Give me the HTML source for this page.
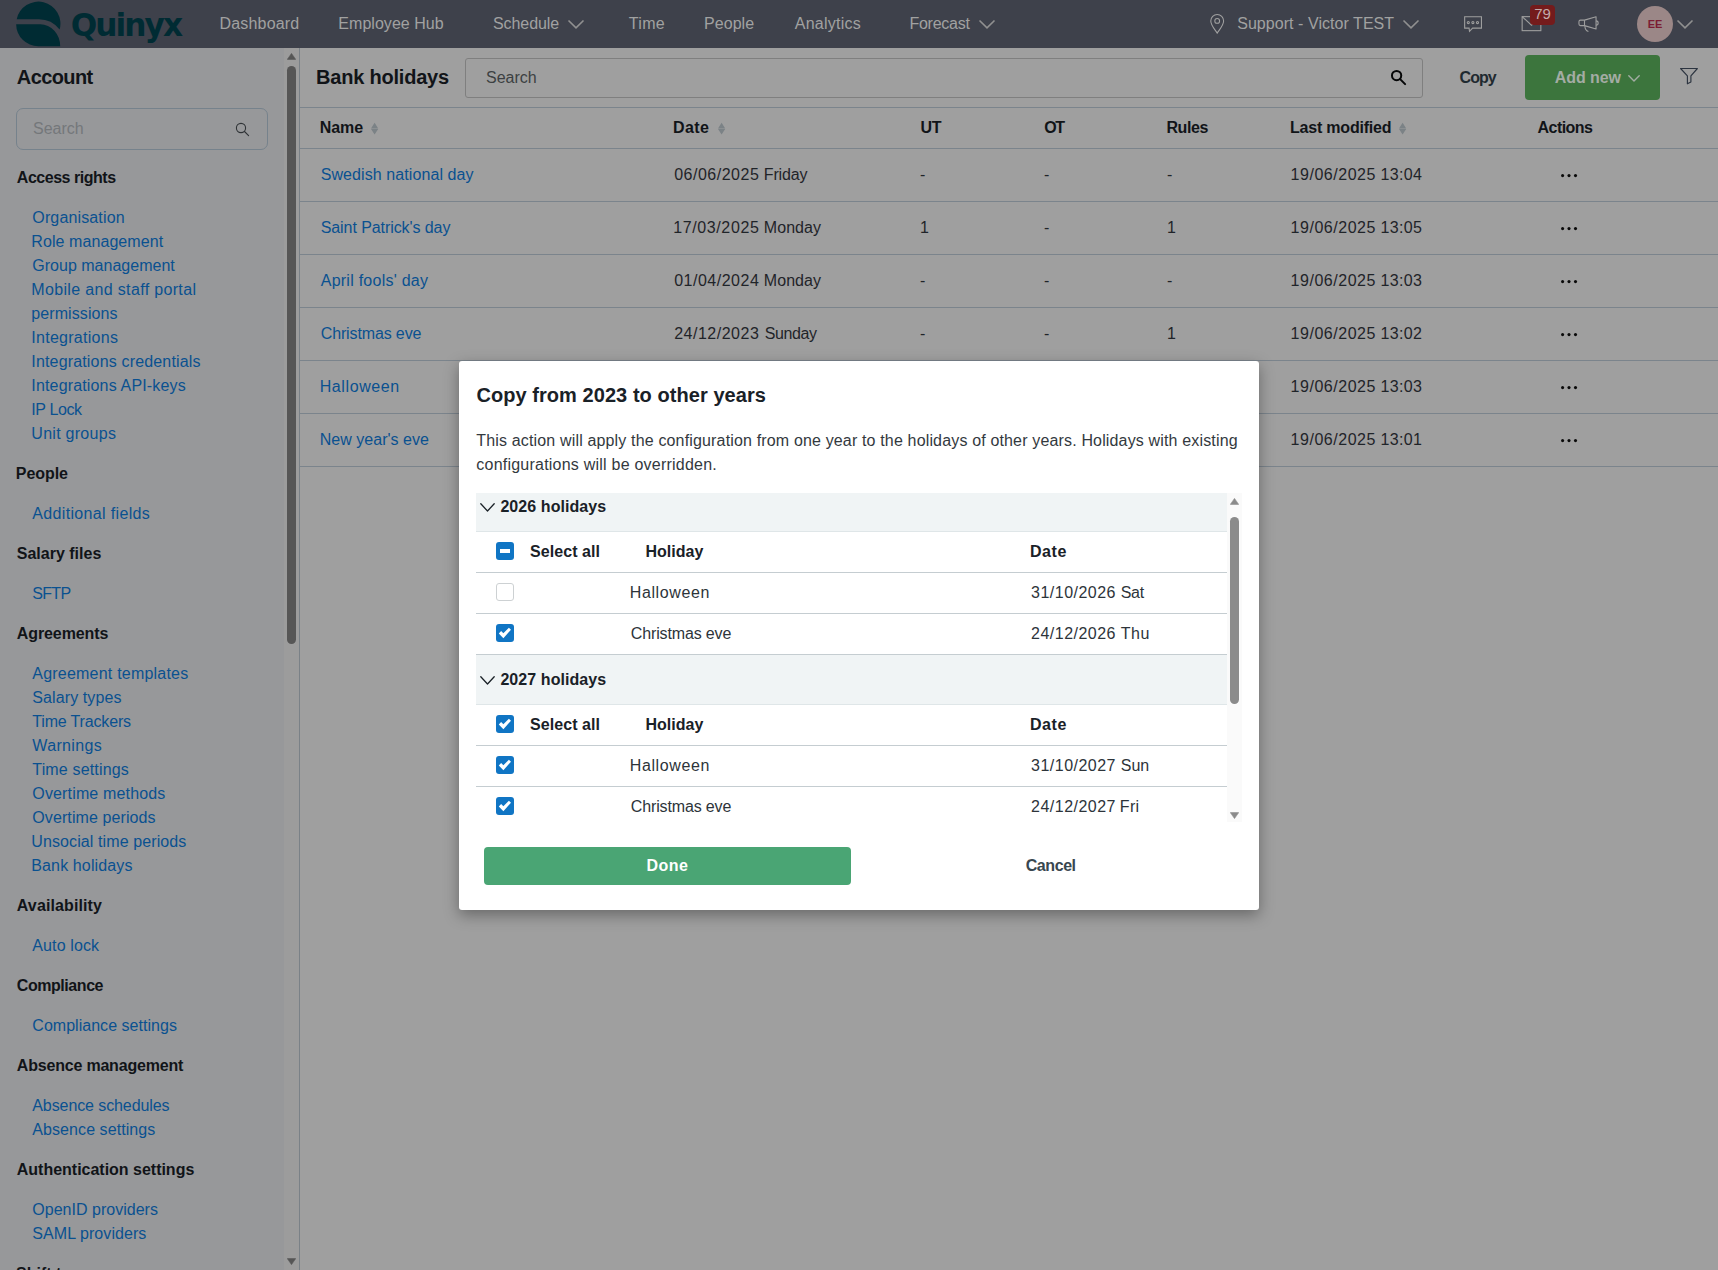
<!DOCTYPE html>
<html lang="en">
<head>
<meta charset="utf-8">
<title>Bank holidays - Quinyx</title>
<style>
*{box-sizing:border-box;margin:0;padding:0}
html,body{width:1718px;height:1270px;overflow:hidden;background:#9f9f9f}
body{font-family:"Liberation Sans",Arial,sans-serif;font-size:16px;color:#1f2429;position:relative}
a{text-decoration:none;color:inherit}
ul{list-style:none}
.abs{position:absolute;white-space:nowrap}
.fit{display:inline-block;white-space:nowrap}

/* ---------- top bar ---------- */
#topbar{position:absolute;left:0;top:0;width:1718px;height:48px;background:#3e414b;color:#a1a1a1}
#topbar .nav{position:absolute;top:0;height:48px;line-height:48px;font-size:16px;white-space:nowrap}
#topbar svg{position:absolute;overflow:visible}
#brand{position:absolute;left:71px;top:1px;height:48px;line-height:48px;font-family:"DejaVu Sans","Liberation Sans",sans-serif;font-size:31.2px;font-weight:700;color:#002b33;white-space:nowrap}
#badge{position:absolute;left:1530px;top:5px;width:25px;height:20px;border-radius:4px;background:#741b1c;color:#c3abab;font-size:15px;line-height:18px;text-align:center}
#avatar{position:absolute;left:1637px;top:6px;width:36px;height:36px;border-radius:50%;background:#9b8787;color:#7b1d33;font-size:11px;font-weight:700;line-height:36px;text-align:center}

/* ---------- sidebar ---------- */
#side{position:absolute;left:0;top:48px;width:300px;height:1222px;background:#97989a;border-right:1px solid #7a8187;overflow:hidden}
#side .track{position:absolute;left:284px;top:0;width:15px;height:1222px;background:#9c9c9c}
#side .thumb{position:absolute;left:287px;top:18px;width:9px;height:578px;border-radius:5px;background:#565656}
#side h2{position:absolute;left:16px;top:15px;font-size:20px;line-height:28px;font-weight:700;color:#111418;white-space:nowrap}
#sidesearch{position:absolute;left:16px;top:60px;width:252px;height:42px;border:1px solid #76828c;border-radius:7px;color:#74777a;line-height:40px;padding-left:16px}
#sidenav{position:absolute;left:16px;top:117.5px;width:260px}
#sidenav h3{font-size:16px;line-height:24px;font-weight:700;color:#111418;white-space:nowrap}
#sidenav ul{margin:16px 0 16px 16px}
#sidenav li{line-height:24px;color:#0a5190;white-space:nowrap}

/* ---------- main ---------- */
#main{position:absolute;left:300px;top:48px;width:1418px;height:1222px;background:#9f9f9f}
#main h1{position:absolute;left:16px;top:15px;font-size:20px;line-height:28px;font-weight:700;color:#111418;white-space:nowrap}
#search{position:absolute;left:165px;top:10px;width:958px;height:40px;border:1px solid #7f7f7f;border-radius:3px;line-height:38px;padding-left:20px;color:#3c3f42}
#copybtn{position:absolute;left:1159px;top:8px;height:45px;line-height:44px;font-weight:700;color:#1f2a30}
#addnew{position:absolute;left:1225px;top:7px;width:135px;height:45px;border-radius:4px;background:#3c753d;color:#a4aca4;font-weight:700;line-height:46px;padding-left:29px}
#tbl{position:absolute;left:0;top:59px;width:1418px;border-top:1px solid #7b848c}
#tbl .row{position:relative;height:53px;border-bottom:1px solid #7b848c;line-height:52px;white-space:nowrap}
#tbl .hd{height:41px;line-height:39px;font-weight:700;color:#111418}
#tbl .row span{position:absolute;top:0}
#tbl .c1{left:20px}#tbl .c2{left:374px}#tbl .c3{left:620px}#tbl .c4{left:744px}#tbl .c5{left:867px}#tbl .c6{left:990px}#tbl .c7{left:1237px}
#tbl .row .c1{color:#0a5190}
#tbl .hd .c1{color:#111418}
#tbl .dots{left:1260px;font-weight:700;letter-spacing:1px}

/* ---------- modal ---------- */
#modal{position:absolute;left:459px;top:360.5px;width:800px;height:549px;background:#fff;border-radius:3px;box-shadow:0 5px 15px rgba(0,0,0,.35);color:#2d343a}
#modal h4{position:absolute;left:17px;top:20px;font-size:20px;line-height:28px;font-weight:700;color:#1a2127;white-space:nowrap}
#modal p{position:absolute;left:17px;top:68.5px;line-height:24px;color:#33393e;white-space:nowrap}
#scroll{position:absolute;left:17px;top:132.5px;width:766px;height:329px;overflow:hidden;background:#fff}
#scroll .inner{position:absolute;left:0;top:-11px;width:751px}
#scroll .sec{height:50px;line-height:49px;background:#f0f4f5;border-bottom:1px solid #dfe6e8;font-weight:700;color:#1a2127;padding-left:24px;position:relative}
#scroll .r{height:41px;line-height:40px;border-bottom:1px solid #c5cdd1;position:relative;white-space:nowrap}
#scroll .r.h{font-weight:700;color:#1a2127}
#scroll .r span{position:absolute;top:0}
#scroll .cb{position:absolute;left:20px;top:10px;width:18px;height:18px;border-radius:3px;background:#1075c4}
#scroll .cb.off{background:#fff;border:1px solid #cdd1d3}
#scroll .sa{left:54px}#scroll .ho{left:170px}#scroll .nm{left:154.5px}#scroll .dt{left:555px}
#mtrack{position:absolute;left:751px;top:0;width:15px;height:329px;background:#fafafa}
#mthumb{position:absolute;left:754px;top:24px;width:9px;height:187px;border-radius:5px;background:#8b8b8b}
#done{position:absolute;left:25px;top:486.5px;width:367px;height:38px;border-radius:4px;background:#4aa574;color:#fff;font-weight:700;text-align:center;line-height:38px}
#cancel{position:absolute;left:400px;top:486.5px;width:383px;height:38px;text-align:center;line-height:38px;font-weight:700;color:#39474f}
</style>
</head>
<body>
<header id="topbar">
<svg style="left:15.86px;top:1.7px" width="44.5" height="44.2" viewBox="0 0 100 100"><path fill="#002b33" d="M1.25 38.9A50 50 0 1 1 98.4 62.4A59 59 0 0 0 51.3 38.9Z"/><path fill="#002b33" d="M0 50.4H54.7A44.9 49.6 0 0 1 99.7 100H50A50 50 0 0 1 0 50.4Z"/></svg>
<div id="brand"><span id="t1" class="fit" style="letter-spacing:-1.928px;position:relative;left:-0.30px">Quinyx</span></div>
<a class="nav" style="left:219.5px"><span id="t2" class="fit" style="letter-spacing:0.178px">Dashboard</span></a>
<a class="nav" style="left:338.5px"><span id="t3" class="fit" style="letter-spacing:0.041px;position:relative;left:-0.21px">Employee Hub</span></a>
<a class="nav" style="left:492px"><span id="t4" class="fit" style="letter-spacing:-0.074px;position:relative;left:1.00px">Schedule</span></a>
<svg style="left:567.9px;top:19.5px" width="16" height="8.8" viewBox="0 0 16 8.8" fill="none" stroke="#909090" stroke-width="1.6" stroke-linejoin="miter"><path d="M0.5 0.5 L8.0 7.9 L15.5 0.5"/></svg>
<a class="nav" style="left:628px"><span id="t5" class="fit" style="letter-spacing:0.312px;position:relative;left:0.80px">Time</span></a>
<a class="nav" style="left:704px"><span id="t6" class="fit" style="letter-spacing:0.036px;position:relative;left:0.10px">People</span></a>
<a class="nav" style="left:794px"><span id="t7" class="fit" style="letter-spacing:0.260px;position:relative;left:0.71px">Analytics</span></a>
<a class="nav" style="left:909.5px"><span id="t8" class="fit" style="letter-spacing:-0.242px;position:relative;left:-0.10px">Forecast</span></a>
<svg style="left:979.2px;top:19.5px" width="16" height="8.8" viewBox="0 0 16 8.8" fill="none" stroke="#909090" stroke-width="1.6" stroke-linejoin="miter"><path d="M0.5 0.5 L8.0 7.9 L15.5 0.5"/></svg>
<svg style="left:1209.6px;top:13.6px" width="14.4" height="20.1" viewBox="0 0 15 21" fill="none" stroke="#a1a1a1" stroke-width="1.1"><path d="M7.5 20 C4.5 15.5 0.8 11.5 0.8 7.3 A6.7 6.7 0 0 1 14.2 7.3 C14.2 11.5 10.5 15.5 7.5 20Z"/><circle cx="7.5" cy="7.2" r="2.5"/></svg>
<a class="nav" style="left:1236.5px"><span id="t9" class="fit" style="letter-spacing:0.049px;position:relative;left:0.71px">Support - Victor TEST</span></a>
<svg style="left:1402.9px;top:19.5px" width="16" height="8.8" viewBox="0 0 16 8.8" fill="none" stroke="#909090" stroke-width="1.6" stroke-linejoin="miter"><path d="M0.5 0.5 L8.0 7.9 L15.5 0.5"/></svg>
<svg style="left:1463px;top:15px" width="20" height="18" viewBox="0 0 20 18" fill="none" stroke="#9e9e9e" stroke-width="1.1"><path d="M1.65 1.75 H18.45 V13.15 H9.6 L6.5 16.3 L6.1 13.15 H1.65 Z"/><circle cx="5.3" cy="7.6" r="1.05"/><circle cx="9.9" cy="7.6" r="1.05"/><circle cx="14.5" cy="7.6" r="1.05"/></svg>
<svg style="left:1520.5px;top:15px" width="21" height="17" viewBox="0 0 21 17" fill="none" stroke="#9e9e9e" stroke-width="1.1"><rect x="1.15" y="1.65" width="18.7" height="14"/><path d="M1.15 1.65 L10.5 10.2 L19.85 1.65"/></svg>
<div id="badge">79</div>
<svg style="left:1577.5px;top:15px" width="22" height="18" viewBox="0 0 22 18" fill="none" stroke="#9e9e9e" stroke-width="1.1" stroke-linejoin="round"><path d="M2.5 5.15 H6.5 L18.05 1.75 V14.05 L6.5 10.65 H2.5 Q0.95 10.65 0.95 9.1 V6.7 Q0.95 5.15 2.5 5.15Z"/><path d="M6.5 5.15 V10.65"/><path d="M6.9 10.9 C6.9 13.6 8 15.6 10.4 16.6"/><path d="M18.05 5.9 A2.1 2.1 0 0 1 18.05 10.1"/></svg>
<div id="avatar">EE</div>
<svg style="left:1677px;top:19.5px" width="16" height="8.8" viewBox="0 0 16 8.8" fill="none" stroke="#909090" stroke-width="1.6" stroke-linejoin="miter"><path d="M0.5 0.5 L8.0 7.9 L15.5 0.5"/></svg>
</header>
<aside id="side">
<div class="track"></div><div class="thumb"></div>
<svg class="abs" style="left:287px;top:5px" width="9" height="7" viewBox="0 0 9 7"><path d="M4.5 0.4 L8.7 6.4 H0.3Z" fill="#565656" stroke="#565656" stroke-width="0.6" stroke-linejoin="round"/></svg>
<svg class="abs" style="left:287px;top:1210px" width="9" height="7" viewBox="0 0 9 7"><path d="M4.5 6.6 L8.7 0.6 H0.3Z" fill="#565656" stroke="#565656" stroke-width="0.6" stroke-linejoin="round"/></svg>
<h2><span id="t10" class="fit" style="letter-spacing:-0.590px;position:relative;left:0.80px">Account</span></h2>
<div id="sidesearch">Search<svg class="abs" style="left:218px;top:12.5px" width="15" height="15" viewBox="0 0 15 15" fill="none" stroke="#2f3336" stroke-width="1.1" stroke-linecap="round"><circle cx="6" cy="6" r="4.6"/><path d="M9.5 9.5 L13.6 13.6"/></svg></div>
<nav id="sidenav">
<h3><span id="t11" class="fit" style="letter-spacing:-0.470px;position:relative;left:0.80px">Access rights</span></h3>
<ul><li><a><span id="t12" class="fit" style="letter-spacing:0.144px;position:relative;left:0.30px">Organisation</span></a></li><li><a><span id="t13" class="fit" style="letter-spacing:0.079px;position:relative;left:-0.71px">Role management</span></a></li><li><a><span id="t14" class="fit" style="letter-spacing:0.009px;position:relative;left:0.30px">Group management</span></a></li><li><a><span id="t15" class="fit" style="letter-spacing:0.342px;position:relative;left:-0.71px">Mobile and staff portal</span><br><span id="t16" class="fit" style="letter-spacing:0.084px;position:relative;left:-0.71px">permissions</span></a></li><li><a><span id="t17" class="fit" style="letter-spacing:0.272px;position:relative;left:-0.71px">Integrations</span></a></li><li><a><span id="t18" class="fit" style="letter-spacing:0.164px;position:relative;left:-0.71px">Integrations credentials</span></a></li><li><a><span id="t19" class="fit" style="letter-spacing:0.161px;position:relative;left:-0.71px">Integrations API-keys</span></a></li><li><a><span id="t20" class="fit" style="letter-spacing:-0.393px;position:relative;left:-0.71px">IP Lock</span></a></li><li><a><span id="t21" class="fit" style="letter-spacing:0.278px;position:relative;left:-0.71px">Unit groups</span></a></li></ul>
<h3><span id="t22" class="fit" style="letter-spacing:-0.053px;position:relative;left:-0.21px">People</span></h3>
<ul><li><a><span id="t23" class="fit" style="letter-spacing:0.339px;position:relative;left:0.30px">Additional fields</span></a></li></ul>
<h3><span id="t24" class="fit" style="position:relative;left:0.80px">Salary files</span></h3>
<ul><li><a><span id="t25" class="fit" style="letter-spacing:-0.706px;position:relative;left:0.30px">SFTP</span></a></li></ul>
<h3><span id="t26" class="fit" style="letter-spacing:-0.098px;position:relative;left:0.80px">Agreements</span></h3>
<ul><li><a><span id="t27" class="fit" style="letter-spacing:0.212px;position:relative;left:0.30px">Agreement templates</span></a></li><li><a><span id="t28" class="fit" style="letter-spacing:0.096px;position:relative;left:0.30px">Salary types</span></a></li><li><a><span id="t29" class="fit" style="letter-spacing:-0.162px;position:relative;left:0.30px">Time Trackers</span></a></li><li><a><span id="t30" class="fit" style="letter-spacing:0.345px;position:relative;left:0.30px">Warnings</span></a></li><li><a><span id="t31" class="fit" style="letter-spacing:0.163px;position:relative;left:0.30px">Time settings</span></a></li><li><a><span id="t32" class="fit" style="letter-spacing:0.153px;position:relative;left:0.30px">Overtime methods</span></a></li><li><a><span id="t33" class="fit" style="letter-spacing:0.099px;position:relative;left:0.30px">Overtime periods</span></a></li><li><a><span id="t34" class="fit" style="letter-spacing:0.102px;position:relative;left:-0.71px">Unsocial time periods</span></a></li><li><a><span id="t35" class="fit" style="letter-spacing:0.124px;position:relative;left:-0.71px">Bank holidays</span></a></li></ul>
<h3><span id="t36" class="fit" style="letter-spacing:0.111px;position:relative;left:0.80px">Availability</span></h3>
<ul><li><a><span id="t37" class="fit" style="letter-spacing:0.123px;position:relative;left:0.30px">Auto lock</span></a></li></ul>
<h3><span id="t38" class="fit" style="letter-spacing:-0.443px;position:relative;left:0.80px">Compliance</span></h3>
<ul><li><a><span id="t39" class="fit" style="letter-spacing:0.029px;position:relative;left:0.30px">Compliance settings</span></a></li></ul>
<h3><span id="t40" class="fit" style="letter-spacing:-0.195px;position:relative;left:0.80px">Absence management</span></h3>
<ul><li><a><span id="t41" class="fit" style="letter-spacing:-0.097px;position:relative;left:0.30px">Absence schedules</span></a></li><li><a><span id="t42" class="fit" style="letter-spacing:0.077px;position:relative;left:0.30px">Absence settings</span></a></li></ul>
<h3><span id="t43" class="fit" style="letter-spacing:-0.013px;position:relative;left:0.80px">Authentication settings</span></h3>
<ul><li><a><span id="t44" class="fit" style="letter-spacing:0.014px;position:relative;left:0.30px">OpenID providers</span></a></li><li><a><span id="t45" class="fit" style="letter-spacing:0.060px;position:relative;left:0.30px">SAML providers</span></a></li></ul>
<h3>Shift types</h3>
</nav></aside>
<main id="main">
<h1><span id="t46" class="fit" style="letter-spacing:-0.206px">Bank holidays</span></h1>
<div id="search">Search<svg class="abs" style="left:924.4px;top:9.9px" width="17" height="17" viewBox="0 0 17 17" fill="none" stroke="#050607" stroke-width="2" stroke-linecap="round"><circle cx="6.6" cy="6.6" r="4.65"/><path d="M10.1 10.1 L15.1 15.1"/></svg></div>
<div id="copybtn"><span id="t47" class="fit" style="letter-spacing:-1.001px;position:relative;left:0.60px">Copy</span></div>
<div id="addnew"><span id="t48" class="fit" style="letter-spacing:-0.086px;position:relative;left:0.80px">Add new</span><svg class="abs" style="left:103px;top:19.5px" width="12" height="7" viewBox="0 0 12 7" fill="none" stroke="#a3ada3" stroke-width="1.4" stroke-linecap="round" stroke-linejoin="round"><path d="M0.8 0.8 L6 6 L11.2 0.8"/></svg></div>
<svg class="abs" style="left:1380px;top:19px" width="19" height="18" viewBox="0 0 19 18" fill="none" stroke="#2c3440" stroke-width="1.15" stroke-linejoin="round"><path d="M0.6 1.5 H17.4 L10.9 8.8 V15.1 L7.4 16.8 V8.8 Z"/></svg>
<div id="tbl">
<div class="row hd"><span class="c1"><span id="t49" class="fit" style="letter-spacing:-0.060px;position:relative;left:-0.30px">Name</span></span><svg class="abs" style="left:71px;top:14px" width="8" height="13" viewBox="0 0 8 13"><path d="M3.6 0.8 L7.2 6.5 H0Z M3.6 12.6 L7.2 7.1 H0Z" fill="#7b8286"/></svg><span class="c2"><span id="t50" class="fit" style="letter-spacing:0.406px;position:relative;left:-1.00px">Date</span></span><svg class="abs" style="left:417.5px;top:14px" width="8" height="13" viewBox="0 0 8 13"><path d="M3.6 0.8 L7.2 6.5 H0Z M3.6 12.6 L7.2 7.1 H0Z" fill="#7b8286"/></svg><span class="c3"><span id="t51" class="fit" style="letter-spacing:-0.455px;position:relative;left:0.60px">UT</span></span><span class="c4"><span id="t52" class="fit" style="letter-spacing:-1.445px;position:relative;left:0.21px">OT</span></span><span class="c5"><span id="t53" class="fit" style="letter-spacing:-0.368px;position:relative;left:-0.60px">Rules</span></span><span class="c6"><span id="t54" class="fit" style="letter-spacing:-0.203px">Last modified</span></span><svg class="abs" style="left:1099px;top:14px" width="8" height="13" viewBox="0 0 8 13"><path d="M3.6 0.8 L7.2 6.5 H0Z M3.6 12.6 L7.2 7.1 H0Z" fill="#7b8286"/></svg><span class="c7"><span id="t55" class="fit" style="letter-spacing:-0.529px;position:relative;left:0.50px">Actions</span></span></div>
<div class="row"><span class="c1"><a><span id="t56" class="fit" style="letter-spacing:0.084px;position:relative;left:0.71px">Swedish national day</span></a></span><span class="c2"><span id="t57" class="fit" style="letter-spacing:0.502px;position:relative;left:0.21px">06/06/2025</span> <span id="t58" class="fit" style="letter-spacing:-0.171px;position:relative;left:0.24px">Friday</span></span><span class="c3">-</span><span class="c4">-</span><span class="c5">-</span><span class="c6"><span id="t59" class="fit" style="letter-spacing:0.524px;position:relative;left:0.60px">19/06/2025</span> <span id="t60" class="fit" style="letter-spacing:0.340px;position:relative;left:0.72px">13:04</span></span><svg class="abs" style="left:1260.9px;top:24.9px" width="17" height="4" viewBox="0 0 17 4"><circle cx="1.6" cy="1.6" r="1.55" fill="#0a0a0a"/><circle cx="8" cy="1.6" r="1.55" fill="#0a0a0a"/><circle cx="14.5" cy="1.6" r="1.55" fill="#0a0a0a"/></svg></div>
<div class="row"><span class="c1"><a><span id="t61" class="fit" style="letter-spacing:-0.078px;position:relative;left:0.71px">Saint Patrick's day</span></a></span><span class="c2"><span id="t62" class="fit" style="letter-spacing:0.613px;position:relative;left:-0.80px">17/03/2025</span> <span id="t63" class="fit" style="letter-spacing:0.056px;position:relative;left:-0.88px">Monday</span></span><span class="c3">1</span><span class="c4">-</span><span class="c5">1</span><span class="c6"><span id="t64" class="fit" style="letter-spacing:0.524px;position:relative;left:0.60px">19/06/2025</span> <span id="t65" class="fit" style="letter-spacing:0.340px;position:relative;left:0.72px">13:05</span></span><svg class="abs" style="left:1260.9px;top:24.9px" width="17" height="4" viewBox="0 0 17 4"><circle cx="1.6" cy="1.6" r="1.55" fill="#0a0a0a"/><circle cx="8" cy="1.6" r="1.55" fill="#0a0a0a"/><circle cx="14.5" cy="1.6" r="1.55" fill="#0a0a0a"/></svg></div>
<div class="row"><span class="c1"><a><span id="t66" class="fit" style="letter-spacing:0.250px;position:relative;left:0.71px">April fools' day</span></a></span><span class="c2"><span id="t67" class="fit" style="letter-spacing:0.502px;position:relative;left:0.21px">01/04/2024</span> <span id="t68" class="fit" style="letter-spacing:0.056px;position:relative;left:0.24px">Monday</span></span><span class="c3">-</span><span class="c4">-</span><span class="c5">-</span><span class="c6"><span id="t69" class="fit" style="letter-spacing:0.524px;position:relative;left:0.60px">19/06/2025</span> <span id="t70" class="fit" style="letter-spacing:0.340px;position:relative;left:0.72px">13:03</span></span><svg class="abs" style="left:1260.9px;top:24.9px" width="17" height="4" viewBox="0 0 17 4"><circle cx="1.6" cy="1.6" r="1.55" fill="#0a0a0a"/><circle cx="8" cy="1.6" r="1.55" fill="#0a0a0a"/><circle cx="14.5" cy="1.6" r="1.55" fill="#0a0a0a"/></svg></div>
<div class="row"><span class="c1"><a><span id="t71" class="fit" style="letter-spacing:-0.129px;position:relative;left:0.71px">Christmas eve</span></a></span><span class="c2"><span id="t72" class="fit" style="letter-spacing:0.502px;position:relative;left:0.21px">24/12/2023</span> <span id="t73" class="fit" style="letter-spacing:-0.413px;position:relative;left:1.24px">Sunday</span></span><span class="c3">-</span><span class="c4">-</span><span class="c5">1</span><span class="c6"><span id="t74" class="fit" style="letter-spacing:0.524px;position:relative;left:0.60px">19/06/2025</span> <span id="t75" class="fit" style="letter-spacing:0.340px;position:relative;left:0.72px">13:02</span></span><svg class="abs" style="left:1260.9px;top:24.9px" width="17" height="4" viewBox="0 0 17 4"><circle cx="1.6" cy="1.6" r="1.55" fill="#0a0a0a"/><circle cx="8" cy="1.6" r="1.55" fill="#0a0a0a"/><circle cx="14.5" cy="1.6" r="1.55" fill="#0a0a0a"/></svg></div>
<div class="row"><span class="c1"><a><span id="t76" class="fit" style="letter-spacing:0.598px;position:relative;left:-0.30px">Halloween</span></a></span><span class="c2"><span id="t77" class="fit" style="letter-spacing:0.502px;position:relative;left:0.21px">31/10/2023</span> <span id="t78" class="fit" style="letter-spacing:-1.096px;position:relative;left:1.24px">Tuesday</span></span><span class="c3">-</span><span class="c4">-</span><span class="c5">-</span><span class="c6"><span id="t79" class="fit" style="letter-spacing:0.524px;position:relative;left:0.60px">19/06/2025</span> <span id="t80" class="fit" style="letter-spacing:0.340px;position:relative;left:0.72px">13:03</span></span><svg class="abs" style="left:1260.9px;top:24.9px" width="17" height="4" viewBox="0 0 17 4"><circle cx="1.6" cy="1.6" r="1.55" fill="#0a0a0a"/><circle cx="8" cy="1.6" r="1.55" fill="#0a0a0a"/><circle cx="14.5" cy="1.6" r="1.55" fill="#0a0a0a"/></svg></div>
<div class="row"><span class="c1"><a><span id="t81" class="fit" style="letter-spacing:0.025px;position:relative;left:-0.30px">New year's eve</span></a></span><span class="c2"><span id="t82" class="fit" style="letter-spacing:0.502px;position:relative;left:0.21px">01/01/2023</span> <span id="t83" class="fit" style="letter-spacing:-0.413px;position:relative;left:1.24px">Sunday</span></span><span class="c3">-</span><span class="c4">-</span><span class="c5">-</span><span class="c6"><span id="t84" class="fit" style="letter-spacing:0.524px;position:relative;left:0.60px">19/06/2025</span> <span id="t85" class="fit" style="letter-spacing:0.340px;position:relative;left:0.72px">13:01</span></span><svg class="abs" style="left:1260.9px;top:24.9px" width="17" height="4" viewBox="0 0 17 4"><circle cx="1.6" cy="1.6" r="1.55" fill="#0a0a0a"/><circle cx="8" cy="1.6" r="1.55" fill="#0a0a0a"/><circle cx="14.5" cy="1.6" r="1.55" fill="#0a0a0a"/></svg></div>
</div></main>
<section id="modal">
<h4><span id="t86" class="fit" style="letter-spacing:0.059px;position:relative;left:0.40px">Copy from 2023 to other years</span></h4>
<p><span id="t87" class="fit" style="letter-spacing:0.157px;position:relative;left:0.30px">This action will apply the configuration from one year to the holidays of other years. Holidays with existing</span><br><span id="t88" class="fit" style="letter-spacing:0.225px;position:relative;left:0.30px">configurations will be overridden.</span></p>
<div id="scroll"><div class="inner">
<div class="sec"><svg class="abs" style="left:4px;top:21px" width="15" height="9" viewBox="0 0 15 9" fill="none" stroke="#1a2127" stroke-width="1.3" stroke-linecap="round" stroke-linejoin="round"><path d="M0.8 0.8 L7.5 8 L14.2 0.8"/></svg><span id="t89" class="fit" style="letter-spacing:0.071px;position:relative;left:0.40px">2026 holidays</span></div><div class="r h"><i class="cb"><svg width="18" height="18" viewBox="0 0 18 18" style="position:absolute;left:0;top:0"><rect x="4" y="7" width="10" height="4" fill="#fff"/></svg></i><span class="sa"><span id="t90" class="fit" style="letter-spacing:0.063px">Select all</span></span><span class="ho"><span id="t91" class="fit" style="letter-spacing:0.018px;position:relative;left:-0.60px">Holiday</span></span><span class="dt"><span id="t92" class="fit" style="letter-spacing:0.540px;position:relative;left:-1.00px">Date</span></span></div><div class="r"><i class="cb off"></i><span class="nm"><span id="t93" class="fit" style="letter-spacing:0.598px;position:relative;left:-0.71px">Halloween</span></span><span class="dt"><span id="t94" class="fit" style="letter-spacing:0.480px;position:relative;left:0.10px">31/10/2026</span> <span id="t95" class="fit" style="letter-spacing:-0.285px;position:relative;left:0.37px">Sat</span></span></div><div class="r"><i class="cb"><svg width="18" height="18" viewBox="0 0 18 18" style="position:absolute;left:0;top:0"><path fill="#fff" d="M2.8 9.5L5.1 7L7.35 9.25L12.9 3.7L15 5.7L7.4 14.2Z"/></svg></i><span class="nm"><span id="t96" class="fit" style="letter-spacing:-0.146px;position:relative;left:0.30px">Christmas eve</span></span><span class="dt"><span id="t97" class="fit" style="letter-spacing:0.480px;position:relative;left:0.10px">24/12/2026</span> <span id="t98" class="fit" style="letter-spacing:0.564px;position:relative;left:0.37px">Thu</span></span></div>
<div class="sec"><svg class="abs" style="left:4px;top:21px" width="15" height="9" viewBox="0 0 15 9" fill="none" stroke="#1a2127" stroke-width="1.3" stroke-linecap="round" stroke-linejoin="round"><path d="M0.8 0.8 L7.5 8 L14.2 0.8"/></svg><span id="t99" class="fit" style="letter-spacing:0.071px;position:relative;left:0.40px">2027 holidays</span></div><div class="r h"><i class="cb"><svg width="18" height="18" viewBox="0 0 18 18" style="position:absolute;left:0;top:0"><path fill="#fff" d="M2.8 9.5L5.1 7L7.35 9.25L12.9 3.7L15 5.7L7.4 14.2Z"/></svg></i><span class="sa"><span id="t100" class="fit" style="letter-spacing:0.063px">Select all</span></span><span class="ho"><span id="t101" class="fit" style="letter-spacing:0.018px;position:relative;left:-0.60px">Holiday</span></span><span class="dt"><span id="t102" class="fit" style="letter-spacing:0.540px;position:relative;left:-1.00px">Date</span></span></div><div class="r"><i class="cb"><svg width="18" height="18" viewBox="0 0 18 18" style="position:absolute;left:0;top:0"><path fill="#fff" d="M2.8 9.5L5.1 7L7.35 9.25L12.9 3.7L15 5.7L7.4 14.2Z"/></svg></i><span class="nm"><span id="t103" class="fit" style="letter-spacing:0.598px;position:relative;left:-0.71px">Halloween</span></span><span class="dt"><span id="t104" class="fit" style="letter-spacing:0.480px;position:relative;left:0.10px">31/10/2027</span> <span id="t105" class="fit" style="letter-spacing:0.015px;position:relative;left:0.37px">Sun</span></span></div><div class="r"><i class="cb"><svg width="18" height="18" viewBox="0 0 18 18" style="position:absolute;left:0;top:0"><path fill="#fff" d="M2.8 9.5L5.1 7L7.35 9.25L12.9 3.7L15 5.7L7.4 14.2Z"/></svg></i><span class="nm"><span id="t106" class="fit" style="letter-spacing:-0.146px;position:relative;left:0.30px">Christmas eve</span></span><span class="dt"><span id="t107" class="fit" style="letter-spacing:0.480px;position:relative;left:0.10px">24/12/2027</span> <span id="t108" class="fit" style="letter-spacing:0.399px;position:relative;left:-0.65px">Fri</span></span></div>
</div><div id="mtrack"></div><div id="mthumb"></div>
<svg class="abs" style="left:754px;top:5px" width="9" height="7" viewBox="0 0 9 7"><path d="M4.5 0.4 L8.7 6.4 H0.3Z" fill="#8b8b8b" stroke="#8b8b8b" stroke-width="0.6" stroke-linejoin="round"/></svg>
<svg class="abs" style="left:754px;top:319px" width="9" height="7" viewBox="0 0 9 7"><path d="M4.5 6.6 L8.7 0.6 H0.3Z" fill="#8b8b8b" stroke="#8b8b8b" stroke-width="0.6" stroke-linejoin="round"/></svg>
</div>
<div id="done"><span id="t109" class="fit" style="letter-spacing:0.466px;position:relative;left:-0.18px">Done</span></div>
<div id="cancel"><span id="t110" class="fit" style="letter-spacing:-0.425px;position:relative;left:0.18px">Cancel</span></div>
</section>
</body>
</html>
